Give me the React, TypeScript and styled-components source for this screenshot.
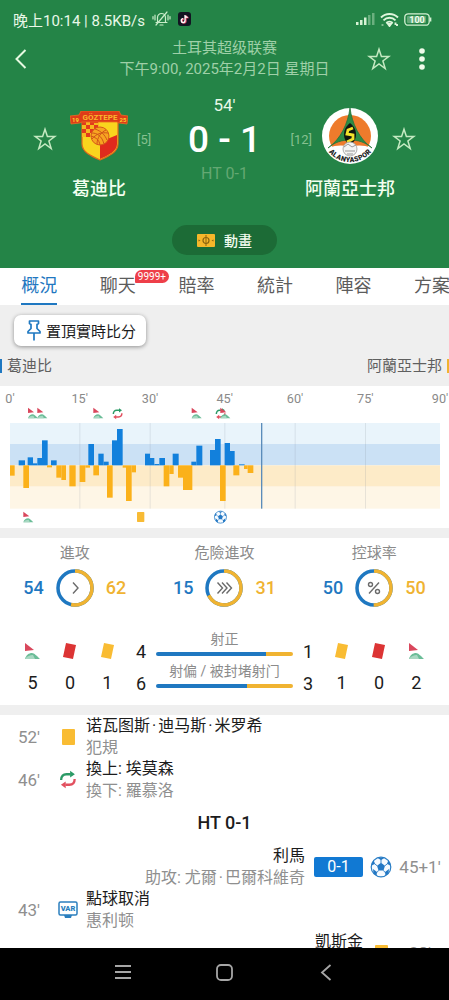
import React from "react";
import styled, { createGlobalStyle } from "styled-components";

const BLUE = "#1f78c1";
const AMBER = "#f0b331";

const GlobalStyle = createGlobalStyle`
  *, *::before, *::after { box-sizing: border-box; }
  body {
    margin: 0;
    background: #efefef;
    font-family: Roboto, "Noto Sans CJK SC", "Noto Sans CJK TC", sans-serif;
    color: #1c1c1c;
  }
  button { font: inherit; color: inherit; border: 0; padding: 0; background: none; cursor: pointer; }
  svg { display: block; flex: none; }
`;

/* ---------- shell ---------- */

const Screen = styled.div`
  display: flex;
  flex-direction: column;
  height: 100vh;
  overflow: hidden;
`;

const Header = styled.header`
  flex: none;
  background: #248447;
  color: #e9f8e8;
  padding-bottom: 13px;
`;

const StatusBar = styled.div`
  display: flex;
  align-items: center;
  justify-content: space-between;
  height: 38px;
  padding: 0 17px 0 13px;
  font-size: 15px;
`;

const StatusGroup = styled.div<{ $gap: number }>`
  display: flex;
  align-items: center;
  gap: ${(p) => p.$gap}px;
`;

const Toolbar = styled.div`
  display: grid;
  grid-template-columns: 72px 1fr 72px;
  align-items: center;
  height: 42px;
  padding: 0 13px;
`;

const IconButton = styled.button`
  display: grid;
  place-items: center;
  min-width: 16px;
  height: 32px;
  color: #d3f1cf;
`;

const BackButton = styled(IconButton)`
  justify-self: start;
  justify-items: start;
  padding-left: 2px;
  width: 32px;
`;

const ToolbarActions = styled.div`
  display: flex;
  justify-content: flex-end;
  gap: 23px;
  padding-right: 6px;
`;

const MatchTitle = styled.h1`
  margin: 0;
  font-size: 15px;
  line-height: 21px;
  font-weight: 400;
  text-align: center;
  white-space: nowrap;
  color: #9fd0a8;
`;

const Board = styled.section`
  display: grid;
  grid-template-columns: 32px 76px 1fr 76px 32px;
  padding: 14px 29px 0;
`;

const StarCell = styled.div`
  display: flex;
  justify-content: center;
  padding-top: 29px;
`;

const Team = styled.div`
  display: flex;
  flex-direction: column;
  align-items: center;
  padding-top: 13px;
`;

const CrestBox = styled.div`
  display: grid;
  place-items: center;
  height: 58px;
`;

const TeamName = styled.h2`
  margin: 12px 0 0;
  font-size: 18px;
  line-height: 24px;
  font-weight: 500;
  white-space: nowrap;
  color: #f3fff0;
`;

const Centre = styled.div`
  display: flex;
  flex-direction: column;
  align-items: center;
`;

const Clock = styled.div`
  font-size: 17px;
  line-height: 22px;
`;

const ScoreRow = styled.div`
  display: grid;
  grid-template-columns: 1fr auto 1fr;
  align-items: center;
  width: 100%;
  height: 48px;
`;

const Rank = styled.span<{ $end?: boolean }>`
  font-size: 13px;
  line-height: 18px;
  text-align: ${(p) => (p.$end ? "right" : "left")};
  color: #86c08f;
`;

const Score = styled.div`
  font-size: 37px;
  line-height: 44px;
  font-weight: 500;
  white-space: pre;
  color: #fff;
`;

const HalfTime = styled.div`
  font-size: 16px;
  line-height: 20px;
  color: #64a873;
`;

const AnimationButton = styled.button`
  display: flex;
  align-items: center;
  justify-content: center;
  gap: 9px;
  width: 105px;
  height: 30px;
  margin: 24px auto 0;
  border-radius: 15px;
  background: #1c6b36;
  color: #f1fbef;
  font-size: 14px;
  font-weight: 500;
`;

/* ---------- tabs ---------- */

const Tabs = styled.nav`
  display: flex;
  flex: none;
  height: 37px;
  overflow: hidden;
  background: #fff;
`;

const Tab = styled.a<{ $active?: boolean }>`
  flex: 0 0 17.5%;
  display: flex;
  justify-content: center;
  height: 37px;
  font-size: 18px;
  line-height: 36px;
  text-decoration: none;
  color: ${(p) => (p.$active ? BLUE : "#5c5c5c")};
`;

const TabLabel = styled.span<{ $active?: boolean }>`
  position: relative;
  white-space: nowrap;
  box-shadow: inset 0 -2px 0 ${(p) => (p.$active ? BLUE : "transparent")};
`;

const Badge = styled.span`
  position: absolute;
  left: 35px;
  top: 2px;
  padding: 0 3px;
  border-radius: 7px 7px 7px 1px;
  background: #ee3f49;
  color: #fff;
  font-size: 10px;
  line-height: 13px;
`;

/* ---------- content ---------- */

const Content = styled.main`
  flex: 1;
  min-height: 0;
  overflow: hidden;
`;

const PinButton = styled.button`
  display: flex;
  align-items: center;
  gap: 5px;
  height: 31px;
  margin: 10px 0 0 14px;
  padding: 0 10px 0 13px;
  border-radius: 7px;
  background: #fff;
  box-shadow: 0 1px 4px rgba(0, 0, 0, 0.4);
  font-size: 15px;
`;

const Legend = styled.div`
  display: flex;
  justify-content: space-between;
  align-items: center;
  height: 40px;
  font-size: 15px;
  line-height: 20px;
  color: #5f5f5f;
`;

const LegendItem = styled.span<{ $away?: boolean }>`
  display: flex;
  align-items: center;
  flex-direction: ${(p) => (p.$away ? "row-reverse" : "row")};
  gap: 5px;
  &::before {
    content: "";
    width: 2px;
    height: 14px;
    background: ${(p) => (p.$away ? AMBER : BLUE)};
  }
`;

const Panel = styled.section`
  margin-bottom: 10px;
  background: #fff;
`;

const ChartSvg = styled.svg`
  width: 100%;
  height: auto;
`;

const Rings = styled.div`
  display: grid;
  grid-template-columns: repeat(3, 1fr);
  padding-top: 5px;
`;

const RingStat = styled.div`
  display: flex;
  flex-direction: column;
  align-items: center;
`;

const RingLabel = styled.div`
  font-size: 15px;
  line-height: 20px;
  color: #8b8b8b;
`;

const RingRow = styled.div`
  display: grid;
  grid-template-columns: 1fr auto 1fr;
  align-items: center;
  gap: 12px;
  margin-top: 6px;
`;

const RingValue = styled.span<{ $away?: boolean }>`
  font-size: 18px;
  line-height: 22px;
  font-weight: 500;
  text-align: ${(p) => (p.$away ? "left" : "right")};
  color: ${(p) => (p.$away ? AMBER : BLUE)};
`;

const Summary = styled.div`
  display: grid;
  grid-template-columns: 112px 1fr 112px;
  padding: 24px 14px 10px;
`;

const Counters = styled.div`
  display: grid;
  grid-template-columns: repeat(3, 1fr);
`;

const Counter = styled.div`
  display: flex;
  flex-direction: column;
  align-items: center;
  gap: 10px;
  padding-top: 9px;
  font-size: 18px;
  line-height: 22px;
`;

const CounterIcon = styled.span`
  display: grid;
  place-items: center;
  height: 22px;
`;

const ShotRow = styled.div`
  display: grid;
  grid-template-columns: 30px 1fr 30px;
  align-items: end;
  height: 32px;
  font-size: 18px;
  line-height: 22px;
  text-align: center;
`;

const ShotBody = styled.div`
  display: flex;
  flex-direction: column;
  gap: 5px;
  height: 32px;
`;

const ShotLabel = styled.span`
  font-size: 14px;
  line-height: 16px;
  white-space: nowrap;
  color: #8b8b8b;
`;

const ShotBar = styled.div<{ $home: number; $away: number }>`
  display: grid;
  grid-template-columns: ${(p) => `${p.$home}fr ${p.$away}fr`};
  height: 4px;
  border-radius: 2px;
  overflow: hidden;
  &::before { content: ""; background: ${BLUE}; }
  &::after { content: ""; background: ${AMBER}; }
`;

/* ---------- events ---------- */

const Events = styled.ul`
  margin: 0;
  padding: 0;
  list-style: none;
  background: #fff;
`;

const EventRow = styled.li<{ $away?: boolean }>`
  display: flex;
  flex-direction: ${(p) => (p.$away ? "row-reverse" : "row")};
  align-items: center;
  gap: 4px;
  height: 43px;
  padding: 0 8px;
  text-align: ${(p) => (p.$away ? "right" : "left")};
`;

const EventTime = styled.span`
  width: 42px;
  font-size: 17px;
  text-align: center;
  white-space: nowrap;
  color: #8f8f8f;
`;

const EventIcon = styled.span`
  display: grid;
  place-items: center;
  width: 28px;
`;

const EventText = styled.div`
  font-size: 16px;
  line-height: 22px;
  white-space: nowrap;
`;

const EventNote = styled.div`
  height: 21px;
  line-height: 21px;
  color: #8f8f8f;
`;

const NameDot = styled.span`
  margin: 0 2px;
`;

const GoalScore = styled.span`
  width: 49px;
  margin-left: 5px;
  border-radius: 2px;
  background: #1179d3;
  color: #fff;
  font-size: 16px;
  line-height: 20px;
  text-align: center;
`;

const HalfTimeRow = styled.li`
  height: 44px;
  font-size: 18px;
  line-height: 44px;
  font-weight: 500;
  text-align: center;
`;

const SystemNav = styled.nav`
  display: flex;
  flex: none;
  height: 52px;
  padding: 0 16%;
  background: #000;
`;

const SystemKey = styled.button`
  flex: 1;
  display: grid;
  place-items: center;
  color: #a6a6a6;
  padding-bottom: 4px;
`;

/* ---------- icons ---------- */

const Star = () => (
  <svg width="24" height="24" viewBox="0 0 24 24" fill="none" stroke="#c5eac2" strokeWidth="1.5" strokeLinejoin="miter">
    <path d="M12 2.200l2.400 7.200h7.600l-6.100 4.600 2.300 7.500-6.200-4.600-6.200 4.600 2.300-7.500L2 9.400h7.600z" />
  </svg>
);

const BackIcon = () => (
  <svg width="12" height="20" viewBox="0 0 12 20" fill="none" stroke="#e6f9e1" strokeWidth="2">
    <path d="M10.500 1L1.500 10l9 9" />
  </svg>
);

const MuteBell = () => (
  <svg width="19" height="16" viewBox="0 0 19 16" fill="none" stroke="#c9ecc9" strokeWidth="1.200" strokeLinecap="round">
    <path d="M5.500 11.500V6.500a4 4 0 0 1 8 0v5M4 11.500h11M8 14h3M3 4v5M1 5.500v2.500M16 4v5M18 5.500v2.500M15 1L4 14" />
  </svg>
);

const TikTok = () => (
  <svg width="13" height="14" viewBox="0 0 13 14">
    <rect width="13" height="14" rx="3" fill="#121522" />
    <path d="M7.300 3v5.600a1.900 1.900 0 1 1-1.900-1.900M7.300 3c.2 1.500 1.200 2.300 2.700 2.400" fill="none" stroke="#e94a6a" strokeWidth="1.600" transform="translate(.5 .4)" />
    <path d="M7 3v5.600a1.900 1.900 0 1 1-1.900-1.900M7 3c.2 1.500 1.200 2.300 2.700 2.400" fill="none" stroke="#fff" strokeWidth="1.300" />
  </svg>
);

const Signal = () => (
  <svg width="19" height="14" viewBox="0 0 19 14" fill="#d7f3d5">
    <rect x="0" y="10" width="2.500" height="3" />
    <rect x="4" y="8" width="2.500" height="5" />
    <rect x="8" y="5.500" width="2.500" height="7.500" />
    <rect x="12" y="3" width="2.500" height="10" opacity=".4" />
    <rect x="16" y="1" width="2.500" height="12" opacity=".4" />
  </svg>
);

const Wifi = () => (
  <svg width="19" height="15" viewBox="0 0 19 15" fill="none" stroke="#dff6dc" strokeWidth="1.900">
    <path d="M1 5.500a12 12 0 0 1 17 0M3.500 8.300a8.500 8.500 0 0 1 12 0M6.300 11a4.600 4.600 0 0 1 6.400 0" />
    <path d="M8 12l1.500 2 1.500-2zM15.500 10.500v2.500M17 12v2M2.500 12.500v1" />
  </svg>
);

const Battery = () => (
  <svg width="28" height="13" viewBox="0 0 28 13">
    <rect x=".8" y=".8" width="24.400" height="11.400" rx="3.500" fill="none" stroke="#d3f0d2" strokeWidth="1.300" />
    <rect x="3" y="3" width="19" height="7" rx="1" fill="#64aa78" />
    <path d="M26.600 4.500v4" stroke="#d3f0d2" strokeWidth="1.500" />
    <text x="13" y="9.800" fontSize="9" fontWeight="700" fill="#f2fff0" textAnchor="middle">100</text>
  </svg>
);

const GoztepeCrest = () => (
  <svg width="58" height="50" viewBox="0 0 58 50">
    <path d="M12 8h36v25c0 8-9 12-18 16-9-4-18-8-18-16z" fill="#f9d51e" stroke="#de6a1c" strokeWidth="1.200" />
    <path d="M30 31l17-7v9c0 7-8 11-17 15z" fill="#e02a1d" />
    <path d="M12 10h17v16H12z" fill="#f6b81f" />
    <path d="M12 10h4v4h-4zM20 10h4v4h-4zM16 14h4v4h-4zM24 14h4v4h-4zM12 18h4v4h-4zM20 18h4v4h-4zM16 22h4v4h-4zM24 10h4v2h-4z" fill="#e23a1c" />
    <circle cx="30" cy="25" r="9" fill="#f7a421" stroke="#d8591a" strokeWidth="1" />
    <path d="M22 22c5 0 10 3 12 11M25 18c6 2 10 6 12 11M22 28c4-5 9-7 16-6M27 33c0-6 4-12 9-14M21 25c6 2 8 4 9 9" fill="none" stroke="#cf5518" strokeWidth="1" />
    <path d="M0 5l9-1 2-4h38l2 4 7 1-1 8-8-1-2-1H12l-2 1-9 1z" fill="#de3c19" stroke="#ee6b20" strokeWidth=".8" />
    <text x="30" y="8.800" fontSize="8" fontWeight="700" fill="#fbb52c" textAnchor="middle">GÖZTEPE</text>
    <text x="5.500" y="11" fontSize="6" fontWeight="700" fill="#fbd02c" textAnchor="middle">19</text>
    <text x="53" y="11" fontSize="6" fontWeight="700" fill="#fbd02c" textAnchor="middle">25</text>
  </svg>
);

const AlanyasporCrest = () => (
  <svg width="58" height="58" viewBox="0 0 58 58">
    <defs>
      <path id="crest-arc" d="M8 42a25.500 25.500 0 0 0 42 0" />
    </defs>
    <circle cx="29" cy="29" r="28" fill="#fff" />
    <circle cx="29" cy="29" r="21" fill="#ee7b2c" />
    <path d="M8 41c7-3 14-3 21-1 7-2 14-2 21 1-4 7-12 12-21 12S12 48 8 41z" fill="#fff" />
    <path d="M29 1c-2 15-9 31-22 40 7-6 14-8 22-8s15 2 22 8C38 32 31 16 29 1z" fill="#2c8c45" stroke="#25743a" strokeWidth=".8" />
    <path d="M29 16c5 4 6 8 6 12s-2 7-6 11c-4-4-6-7-6-11s1-8 6-12z" fill="#11150f" />
    <path d="M32 21l-5 2-1 4 6 1v4l-6 3" fill="none" stroke="#f3e32b" strokeWidth="2.800" />
    <circle cx="29" cy="42" r="7" fill="#f4f4f4" stroke="#9a9a9a" strokeWidth=".8" />
    <path d="M23 40l4-3 4 3 4-2M24 44h10M26 47h6" fill="none" stroke="#999" strokeWidth="1" />
    <text fontSize="7" fontWeight="900" fill="#222">
      <textPath href="#crest-arc" startOffset="50%" textAnchor="middle" dominantBaseline="central">ALANYASPOR</textPath>
    </text>
  </svg>
);

const PitchIcon = () => (
  <svg width="18" height="13" viewBox="0 0 18 13">
    <rect width="18" height="13" rx="1" fill="#f6b72a" />
    <path d="M9 1v11" fill="none" stroke="#8b6410" strokeWidth="1" />
    <circle cx="9" cy="6.500" r="3" fill="none" stroke="#8b6410" strokeWidth="1.200" />
    <path d="M1.500 5.500l2 1-2 1zM16.500 5.500l-2 1 2 1z" fill="#8b6410" />
  </svg>
);

const PinIcon = () => (
  <svg width="14" height="21" viewBox="0 0 14 21" fill="none" stroke={BLUE} strokeWidth="1.700" strokeLinejoin="round">
    <path d="M2.500 1h9v2.500l-1.500 1v4l3 3V13H1v-1.500l3-3v-4l-1.500-1zM7 13v7.500" />
  </svg>
);

const CornerShape = () => (
  <>
    <path d="M1 0l9 7-9 1z" fill="#d9475c" />
    <path d="M1 16c1-4 4-6 7-6 2 0 5 3 8 6z" fill="#6bbd98" />
    <path d="M1 16c2-3 5-4 8-4l2 4z" fill="#a8d8c2" />
  </>
);

const CornerIcon = () => (
  <svg width="17" height="17" viewBox="0 0 17 17"><CornerShape /></svg>
);

const Card = ({ color, tilted }: { color: string; tilted?: boolean }) => (
  <svg width="15" height="18" viewBox="0 0 15 18">
    {tilted ? <path d="M4 1l10 2-3 14-10-2z" fill={color} /> : <rect x="1" y="1" width="13" height="16" rx="1" fill={color} />}
  </svg>
);

const SwapShape = () => (
  <g fill="none" strokeWidth="2.200">
    <path d="M2 9.500C2 5.500 4 4 7 4h4" stroke="#2b9a66" />
    <path d="M10.500 .8l4.500 3.200-4.500 3.200z" fill="#2b9a66" />
    <path d="M14.800 8.500c0 4-2 5.500-5 5.500H6" stroke="#e2505f" />
    <path d="M6.300 10.800L1.800 14l4.500 3.200z" fill="#e2505f" />
  </g>
);

const SwapIcon = () => (
  <svg width="18" height="19" viewBox="0 0 17 18"><SwapShape /></svg>
);

const BallShape = () => (
  <>
    <circle cx="11" cy="11" r="9.800" fill="#f7fbff" stroke="#2b7fc6" strokeWidth="1.200" />
    <path d="M11 6.800l4 2.900-1.500 4.700h-5L7 9.700zM7.500 1.800h7L11 4.300zM1.200 9.500L3.500 3.800l1.600 4.300zM20.800 9.500l-2.300-5.700-1.600 4.300zM3.500 17.500l-.5-4.500 4 3-.5 4zM18.500 17.500l.5-4.500-4 3 .5 4z" fill="#2478c4" />
    <path d="M11 4v3M5 8l2 1.700M17 8l-2 1.700M8.500 14.400L7 16.500M13.500 14.400l1.500 2.100" stroke="#2478c4" strokeWidth=".9" />
  </>
);

const BallIcon = () => (
  <svg width="22" height="22" viewBox="0 0 22 22"><BallShape /></svg>
);

const VarIcon = () => (
  <svg width="20" height="18" viewBox="0 0 20 18">
    <rect x="1" y="1" width="18" height="13" rx="1.500" fill="#fff" stroke="#2b7fbe" strokeWidth="1.500" />
    <path d="M6 14h8l-1 3H7z" fill="#2b7fbe" />
    <text x="10" y="10.300" fontSize="7.500" fontWeight="900" fill="#2b7fbe" textAnchor="middle">VAR</text>
  </svg>
);

const RING_R = 17;
const RING_LEN = 2 * Math.PI * RING_R;

const Ring = ({ home, away, glyph }: { home: number; away: number; glyph: React.ReactNode }) => {
  const awayLen = (RING_LEN * away) / (home + away);
  return (
    <svg width="38" height="38" viewBox="0 0 38 38" fill="none">
      <circle cx="19" cy="19" r={RING_R} stroke={BLUE} strokeWidth="3.500" />
      <circle cx="19" cy="19" r={RING_R} stroke={AMBER} strokeWidth="3.500" strokeDasharray={`${awayLen} ${RING_LEN}`} transform="rotate(-90 19 19)" />
      <g stroke="#6b6b6b" strokeWidth="1.400">{glyph}</g>
    </svg>
  );
};

/* ---------- momentum chart ---------- */

const BASELINE = 241;
type Bar = [x: number, width: number, size: number];

const homeBars: Bar[] = [
  [56, 19, 15], [83, 16, 24], [99, 13, 6], [112, 14, 22], [126, 17, 75], [153, 17, 15],
  [265, 17, 64], [295, 16, 35], [311, 15, 11], [336, 15, 75], [351, 17, 109],
  [435, 15, 35], [450, 13, 22], [463, 15, 4], [478, 17, 22], [518, 18, 35],
  [574, 15, 11], [589, 18, 59], [630, 15, 46], [645, 17, 79], [674, 16, 67], [690, 14, 43], [717, 17, 3],
];

const awayBars: Bar[] = [
  [30, 14, 31], [70, 17, 68], [141, 15, 6], [169, 15, 37], [184, 14, 44], [208, 19, 63],
  [239, 17, 50], [256, 14, 7], [280, 17, 30], [321, 17, 97], [368, 10, 7], [378, 17, 107], [395, 13, 21],
  [491, 17, 63], [508, 13, 26], [534, 15, 37], [549, 28, 74], [660, 17, 107], [700, 18, 30], [732, 11, 11], [743, 17, 23],
];

const axis = [
  { minute: 0, x: 30 }, { minute: 15, x: 239 }, { minute: 30, x: 450 }, { minute: 45, x: 674 },
  { minute: 60, x: 885 }, { minute: 75, x: 1096 }, { minute: 90, x: 1320 },
];

const MomentumChart = () => (
  <ChartSvg viewBox="0 3 1347 426" role="img" aria-label="進攻走勢">
    {axis.map(({ minute, x }) => (
      <text key={minute} x={x} y="53" fontSize="38" fill="#8a8a8a" textAnchor="middle">{`${minute}'`}</text>
    ))}
    <rect x="30" y="114" width="1290" height="63" fill="#e9f4fb" />
    <rect x="30" y="177" width="1290" height="64" fill="#cbe1f5" />
    <rect x="30" y="241" width="1290" height="64" fill="#fdebc8" />
    <rect x="30" y="305" width="1290" height="66" fill="#fef6e6" />
    {axis.slice(1, -1).map(({ minute, x }) => (
      <rect key={minute} x={x - 1} y="114" width="3" height="257" fill="#7d8a96" opacity=".18" />
    ))}
    {homeBars.map(([x, w, h]) => (
      <rect key={x} x={x} y={BASELINE - h} width={w} height={h} fill="#1280dc" />
    ))}
    {awayBars.map(([x, w, h]) => (
      <rect key={x} x={x} y={BASELINE} width={w} height={h} fill="#fbb11a" />
    ))}
    <rect x="783" y="114" width="4" height="257" fill="#5b8cba" />
    <g transform="translate(82 68) scale(2)"><CornerShape /></g>
    <g transform="translate(110 68) scale(2)"><CornerShape /></g>
    <g transform="translate(278 68) scale(2)"><CornerShape /></g>
    <g transform="translate(336 68) scale(2)"><SwapShape /></g>
    <g transform="translate(573 68) scale(2)"><CornerShape /></g>
    <g transform="translate(645 68) scale(2)"><SwapShape /></g>
    <g transform="translate(659 68) scale(2)"><CornerShape /></g>
    <g transform="translate(68 380) scale(2)"><CornerShape /></g>
    <rect x="411" y="381" width="22" height="30" rx="2" fill="#f8bb35" />
    <g transform="translate(641 376) scale(1.850)"><BallShape /></g>
  </ChartSvg>
);

/* ---------- page ---------- */

const RED = "#dc3434";
const YELLOW = "#f9bc33";

const homeCounters = [
  { name: "角球", icon: <CornerIcon />, value: 5 },
  { name: "紅牌", icon: <Card color={RED} tilted />, value: 0 },
  { name: "黃牌", icon: <Card color={YELLOW} tilted />, value: 1 },
];
const awayCounters = [
  { name: "黃牌", icon: <Card color={YELLOW} tilted />, value: 1 },
  { name: "紅牌", icon: <Card color={RED} tilted />, value: 0 },
  { name: "角球", icon: <CornerIcon />, value: 2 },
];

const rings = [
  { label: "進攻", home: 54, away: 62, glyph: <path d="M17 13.500l5 5.500-5 5.500" /> },
  { label: "危險進攻", home: 15, away: 31, glyph: <path d="M12.500 13.500l5 5.500-5 5.500M17 13.500l5 5.500-5 5.500M21.500 13.500l5 5.500-5 5.500" /> },
  {
    label: "控球率", home: 50, away: 50,
    glyph: <><circle cx="15.500" cy="15.500" r="2" /><circle cx="22.500" cy="22.500" r="2" /><path d="M24 13.500l-10 11" /></>,
  },
];

const shots = [
  { label: "射正", home: 4, away: 1 },
  { label: "射偏 / 被封堵射门", home: 6, away: 3 },
];

const tabs = ["概況", "聊天", "賠率", "統計", "陣容", "方案"];

const CounterGroup = ({ items }: { items: typeof homeCounters }) => (
  <Counters>
    {items.map((c) => (
      <Counter key={c.name}>
        <CounterIcon>{c.icon}</CounterIcon>
        <span>{c.value}</span>
      </Counter>
    ))}
  </Counters>
);

/* Gives the dot between the parts of a foreign name some room. */
const PlayerText = ({ text }: { text: string }) => (
  <>
    {text.split("·").map((part, i) => (
      <React.Fragment key={i}>
        {i > 0 && <NameDot>·</NameDot>}
        {part}
      </React.Fragment>
    ))}
  </>
);

type EventProps = {
  time: string;
  icon: React.ReactNode;
  title: string;
  note?: string;
  score?: string;
  away?: boolean;
};

const MatchEvent = ({ time, icon, title, note, score, away }: EventProps) => (
  <EventRow $away={away}>
    <EventTime>{time}</EventTime>
    <EventIcon>{icon}</EventIcon>
    {score && <GoalScore>{score}</GoalScore>}
    <EventText>
      <PlayerText text={title} />
      <EventNote>{note && <PlayerText text={note} />}</EventNote>
    </EventText>
  </EventRow>
);

export default function App() {
  return (
    <Screen>
      <GlobalStyle />
      <Header>
        <StatusBar>
          <StatusGroup $gap={7}>
            <span>晚上10:14 | 8.5KB/s</span>
            <MuteBell />
            <TikTok />
          </StatusGroup>
          <StatusGroup $gap={5}>
            <Signal />
            <Wifi />
            <Battery />
          </StatusGroup>
        </StatusBar>
        <Toolbar>
          <BackButton aria-label="返回"><BackIcon /></BackButton>
          <MatchTitle>
            土耳其超级联赛
            <br />
            下午9:00, 2025年2月2日 星期日
          </MatchTitle>
          <ToolbarActions>
            <IconButton aria-label="收藏"><Star /></IconButton>
            <IconButton aria-label="更多">
              <svg width="6" height="22" viewBox="0 0 6 22" fill="#effbea">
                <circle cx="3" cy="3" r="2.800" /><circle cx="3" cy="11" r="2.800" /><circle cx="3" cy="19" r="2.800" />
              </svg>
            </IconButton>
          </ToolbarActions>
        </Toolbar>
        <Board>
          <StarCell><IconButton aria-label="收藏葛迪比"><Star /></IconButton></StarCell>
          <Team>
            <CrestBox><GoztepeCrest /></CrestBox>
            <TeamName>葛迪比</TeamName>
          </Team>
          <Centre>
            <Clock>54'</Clock>
            <ScoreRow>
              <Rank>[5]</Rank>
              <Score>0 - 1</Score>
              <Rank $end>[12]</Rank>
            </ScoreRow>
            <HalfTime>HT 0-1</HalfTime>
          </Centre>
          <Team>
            <CrestBox><AlanyasporCrest /></CrestBox>
            <TeamName>阿蘭亞士邦</TeamName>
          </Team>
          <StarCell><IconButton aria-label="收藏阿蘭亞士邦"><Star /></IconButton></StarCell>
        </Board>
        <AnimationButton>
          <PitchIcon />
          動畫
        </AnimationButton>
      </Header>

      <Tabs>
        {tabs.map((label, i) => (
          <Tab key={label} href="#" $active={i === 0}>
            <TabLabel $active={i === 0}>
              {label}
              {label === "聊天" && <Badge>9999+</Badge>}
            </TabLabel>
          </Tab>
        ))}
      </Tabs>

      <Content>
        <PinButton>
          <PinIcon />
          置頂實時比分
        </PinButton>
        <Legend>
          <LegendItem>葛迪比</LegendItem>
          <LegendItem $away>阿蘭亞士邦</LegendItem>
        </Legend>

        <Panel>
          <MomentumChart />
        </Panel>

        <Panel>
          <Rings>
            {rings.map((r) => (
              <RingStat key={r.label}>
                <RingLabel>{r.label}</RingLabel>
                <RingRow>
                  <RingValue>{r.home}</RingValue>
                  <Ring home={r.home} away={r.away} glyph={r.glyph} />
                  <RingValue $away>{r.away}</RingValue>
                </RingRow>
              </RingStat>
            ))}
          </Rings>
          <Summary>
            <CounterGroup items={homeCounters} />
            <div>
              {shots.map((s) => (
                <ShotRow key={s.label}>
                  <span>{s.home}</span>
                  <ShotBody>
                    <ShotLabel>{s.label}</ShotLabel>
                    <ShotBar $home={s.home} $away={s.away} />
                  </ShotBody>
                  <span>{s.away}</span>
                </ShotRow>
              ))}
            </div>
            <CounterGroup items={awayCounters} />
          </Summary>
        </Panel>

        <Events>
          <MatchEvent time="52'" icon={<Card color={YELLOW} />} title="诺瓦图斯·迪马斯·米罗希" note="犯規" />
          <MatchEvent time="46'" icon={<SwapIcon />} title="換上: 埃莫森" note="換下: 羅慕洛" />
          <HalfTimeRow>HT 0-1</HalfTimeRow>
          <MatchEvent away time="45+1'" icon={<BallIcon />} score="0-1" title="利馬" note="助攻: 尤爾·巴爾科維奇" />
          <MatchEvent time="43'" icon={<VarIcon />} title="點球取消" note="惠利顿" />
          <MatchEvent away time="28'" icon={<Card color={YELLOW} />} title="凱斯金" />
        </Events>
      </Content>

      <SystemNav>
        <SystemKey aria-label="最近任務">
          <svg width="16" height="16" viewBox="0 0 16 16" stroke="currentColor" strokeWidth="2"><path d="M0 2h16M0 8h16M0 14h16" /></svg>
        </SystemKey>
        <SystemKey aria-label="主畫面">
          <svg width="17" height="17" viewBox="0 0 17 17" fill="none" stroke="currentColor" strokeWidth="1.800"><rect x="1" y="1" width="15" height="15" rx="4" /></svg>
        </SystemKey>
        <SystemKey aria-label="返回">
          <svg width="12" height="17" viewBox="0 0 12 17" fill="none" stroke="currentColor" strokeWidth="1.800"><path d="M10.500 1L2 8.500l8.500 7.500" /></svg>
        </SystemKey>
      </SystemNav>
    </Screen>
  );
}
